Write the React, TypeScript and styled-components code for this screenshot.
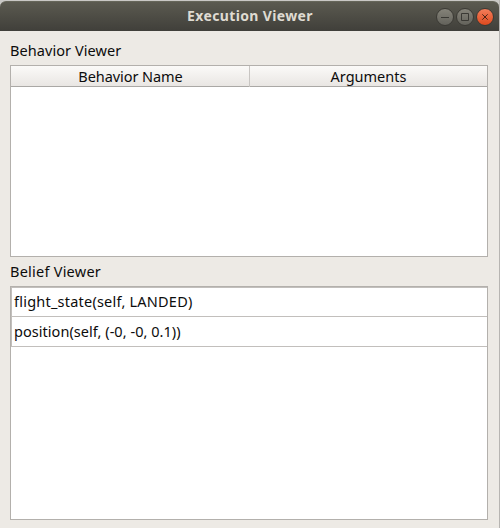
import React from "react";
import styled, { createGlobalStyle } from "styled-components";

const GlobalStyle = createGlobalStyle`
  body { margin: 0; background: #c4c3c1; }
  * { box-sizing: border-box; }
`;

const Window = styled.div`
  width: 500px;
  height: 528px;
  padding-top: 1px;
  border-right: 1px solid #b7b5b2;
  background: #c9c8c5;
  overflow: hidden;
  display: flex;
  flex-direction: column;
  font-family: "Noto Sans", "Open Sans", sans-serif;
  font-size: 14.5px;
  color: #0c0c0c;
`;

const TitleBar = styled.header`
  height: 30px;
  flex: none;
  display: grid;
  grid-template-columns: 1fr auto 1fr;
  align-items: center;
  padding: 0 5px 0 6px;
  border-top: 1px solid #66665a;
  border-radius: 6px 6px 0 0;
  background: linear-gradient(#5b5a50, #403f3a);
`;

const Title = styled.h1`
  grid-column: 2;
  margin: 0;
  padding-bottom: 2px;
  font-size: 14px;
  line-height: 20px;
  font-weight: 700;
  letter-spacing: 0.36px;
  color: #dfdbd2;
`;

const Controls = styled.div`
  display: flex;
  justify-content: flex-end;
  gap: 2px;
`;

const ControlButton = styled.button<{ $close?: boolean }>`
  width: 18px;
  height: 18px;
  padding: 0;
  border: 1px solid #3b3a35;
  border-radius: 50%;
  background: ${(p) =>
    p.$close ? "linear-gradient(#f37d5a, #df4a1e)" : "linear-gradient(#858379, #63625b)"};
  color: ${(p) => (p.$close ? "#4b2418" : "#3a3934")};

  svg { display: block; }
`;

const Content = styled.main`
  flex: 1;
  display: flex;
  flex-direction: column;
  padding: 9px 11px 8px 10px;
  background: #edeae5;
`;

const Label = styled.div<{ $spacing: number }>`
  height: 25px;
  line-height: 20px;
  letter-spacing: ${(p) => p.$spacing}px;
`;

const Panel = styled.section<{ $height: number }>`
  height: ${(p) => p.$height}px;
  flex: none;
  border: 1px solid #b3b0ac;
  background: #fff;

  & + ${Label} { margin-top: 4px; }
`;

const HeaderRow = styled.div`
  display: grid;
  grid-template-columns: 239px 1fr;
  height: 21px;
  border-bottom: 1px solid #aaa8a5;
  background: linear-gradient(#fbfaf8, #e9e6e3);
`;

const HeaderCell = styled.div<{ $spacing: number }>`
  text-align: center;
  line-height: 21px;
  letter-spacing: ${(p) => p.$spacing}px;

  & + & { border-left: 1px solid #c8c5c2; margin-left: -1px; }
`;

const BeliefRows = styled.div`
  border-top: 1px solid #c2bfbc;
  border-left: 1px solid #c2bfbc;
`;

const Belief = styled.div<{ $spacing: number }>`
  height: 30px;
  padding-left: 2px;
  line-height: 28px;
  letter-spacing: ${(p) => p.$spacing}px;
  border-bottom: 1px solid #c2bfbc;

  &:first-child { height: 29px; line-height: 26px; }
`;

const Glyph = ({ d }: { d: string }) => (
  <svg width="16" height="16" viewBox="0 0 16 16" fill="none" stroke="currentColor">
    <path d={d} />
  </svg>
);

export default function App() {
  return (
    <>
      <GlobalStyle />
      <Window>
        <TitleBar>
          <Title>Execution Viewer</Title>
          <Controls>
            <ControlButton aria-label="Minimize"><Glyph d="M4 8.5h8" /></ControlButton>
            <ControlButton aria-label="Maximize"><Glyph d="M4.5 4.5h7v7h-7z" /></ControlButton>
            <ControlButton $close aria-label="Close"><Glyph d="M5.3 5.3l5.4 5.4M10.7 5.3l-5.4 5.4" /></ControlButton>
          </Controls>
        </TitleBar>
        <Content>
          <Label $spacing={0.07}>Behavior Viewer</Label>
          <Panel $height={192}>
            <HeaderRow>
              <HeaderCell $spacing={-0.07}>Behavior Name</HeaderCell>
              <HeaderCell $spacing={0}>Arguments</HeaderCell>
            </HeaderRow>
          </Panel>
          <Label $spacing={0.24}>Belief Viewer</Label>
          <Panel $height={234}>
            <BeliefRows>
              <Belief $spacing={0.22}>flight_state(self, LANDED)</Belief>
              <Belief $spacing={0.04}>position(self, (-0, -0, 0.1))</Belief>
            </BeliefRows>
          </Panel>
        </Content>
      </Window>
    </>
  );
}
